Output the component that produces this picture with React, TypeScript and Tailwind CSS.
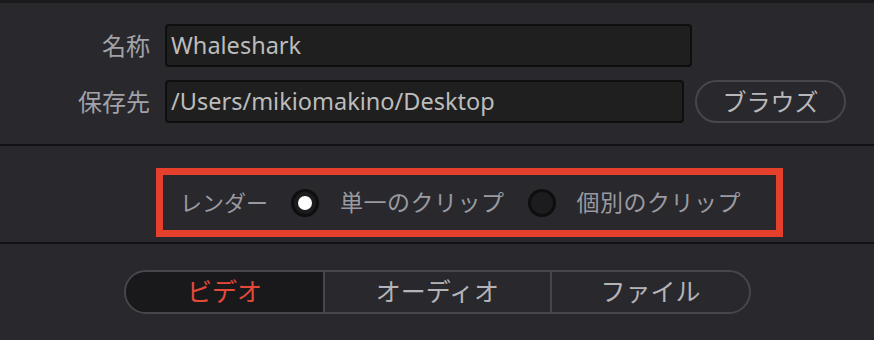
const font = "font-['Noto_Sans','Noto_Sans_CJK_JP',sans-serif]";

const Radio = ({ on }: { on?: boolean }) => (
  <div className="w-[28px] h-[28px] rounded-full bg-[#1c1c1e] border-[3px] border-[#0e0e0f] flex items-center justify-center shrink-0">
    {on && <div className="w-[14px] h-[14px] rounded-full bg-white" />}
  </div>
);

const App = () => (
  <div className={`${font} w-[874px] h-[340px] overflow-hidden bg-[#28282d] border-t-[3px] border-[#1a1a1d]`}>
    {/* name / destination */}
    <div className="pt-[21px] flex flex-col gap-[13px]">
      <div className="flex items-center">
        <div className="w-[150px] text-right text-[24px] text-[#a2a2a8] leading-none">名称</div>
        <div className="ml-[15px] w-[527px] h-[43px] rounded-[4px] bg-[#1f1f1f] border-2 border-[#0e0e0e] flex items-center px-[4px] text-[23.5px] text-[#bcbcbc]">
          Whaleshark
        </div>
      </div>
      <div className="flex items-center">
        <div className="w-[150px] text-right text-[24px] text-[#a2a2a8] leading-none">保存先</div>
        <div className="ml-[15px] w-[519px] h-[43px] rounded-[4px] bg-[#1f1f1f] border-2 border-[#0e0e0e] flex items-center px-[4px] text-[23.5px] text-[#bcbcbc]">
          /Users/mikiomakino/Desktop
        </div>
        <button className="ml-[11px] w-[151px] h-[43px] rounded-full border-2 border-[#46464b] text-[24px] text-[#b8b8bc] flex items-center justify-center">
          ブラウズ
        </button>
      </div>
    </div>

    <div className="mt-[21px] h-[2px] bg-[#111113]" />

    {/* render mode */}
    <div className="pt-[22px] pb-[5px] pl-[156px]">
      <div className="w-[627px] h-[69px] border-[7px] border-[#e5402b] flex items-center pl-[17px] text-[22px] text-[#9a9aa0]">
        <span>レンダー</span>
        <div className="ml-[23px]"><Radio on /></div>
        <span className="ml-[21px] text-[23px] tracking-[0.5px]">単一のクリップ</span>
        <div className="ml-[23px]"><Radio /></div>
        <span className="ml-[21px] text-[23px] tracking-[0.5px]">個別のクリップ</span>
      </div>
    </div>

    <div className="h-[2px] bg-[#111113]" />

    {/* tabs */}
    <div className="pt-[26px] pl-[124px]">
      <div className="flex w-[627px] h-[44px] rounded-full border-2 border-[#46464c] overflow-hidden text-[25px]">
        <div className="w-[197px] bg-[#19191b] text-[#e5493a] flex items-center justify-center">ビデオ</div>
        <div className="w-[2px] bg-[#46464c]" />
        <div className="w-[225px] text-[#b4b4b8] flex items-center justify-center">オーディオ</div>
        <div className="w-[2px] bg-[#46464c]" />
        <div className="flex-1 text-[#b4b4b8] flex items-center justify-center">ファイル</div>
      </div>
    </div>
  </div>
);

export default App;
